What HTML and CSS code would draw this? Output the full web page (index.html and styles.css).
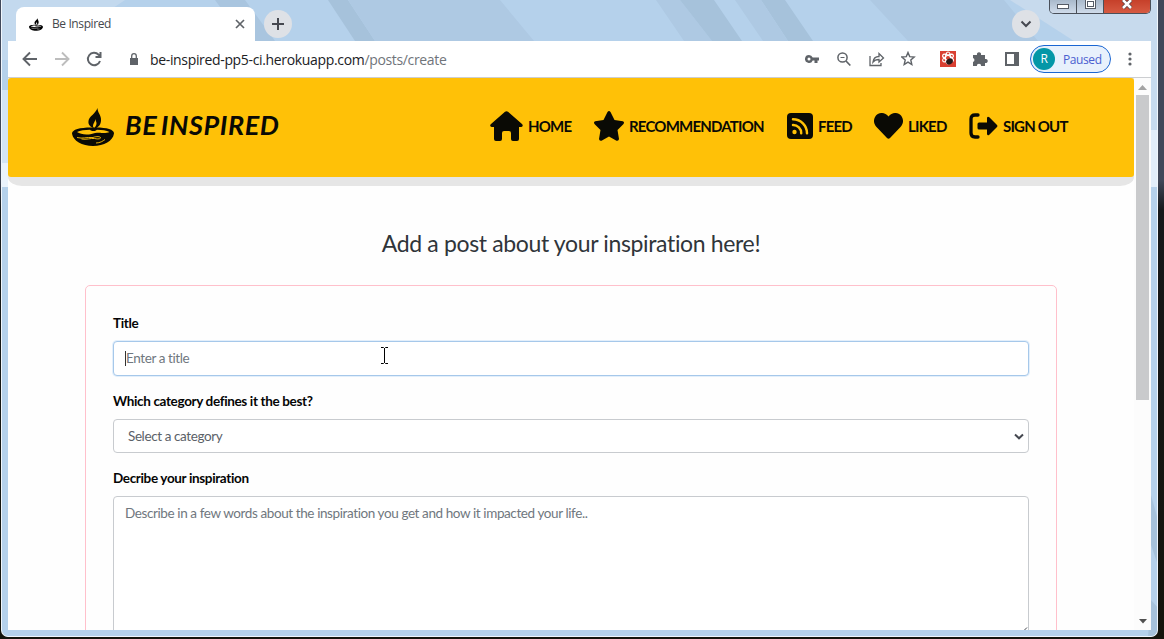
FILE: index.html
```html
<!DOCTYPE html>
<html lang="en">
<head>
<meta charset="utf-8">
<title>Be Inspired</title>
<link rel="stylesheet" href="styles.css">
</head>
<body>
<svg width="0" height="0" class="defs">
  <symbol id="lamp" viewBox="0 0 42 38">
    <path fill-rule="evenodd" d="M25.500 0c0 5 4 7 3.500 12.500-.3 4-2 6.500-6 8C18 19 16 16.500 16.500 13 17 8 23.500 6 25.500 0zM23.500 11c-.5 3-2.500 4.500-2.500 7 0 1 .6 2 1.500 2.700.3-2 2-3 2-5.200 0-1.700-1-2.800-1-4.500z"/>
    <path d="M0 25.500C0 21.500 8 19.500 19 19.500h5c11 0 18 2 18 6C41 33 32 38 21 38S1 33 0 25.500z"/>
    <path class="gold" d="M5 24c3-1.500 8-2.300 13-2.300 1 1 2 1.300 3.500 1.300s2.500-.4 3.500-1.300c5 0 9.500.8 12.500 2.300-2 .8-5 1.200-8 .9-4-.4-7 .2-10 1-5 1-11 .6-14.500-1.900z"/>
    <path class="wave" d="M5 29.500c6 1.500 9-.5 16 0 4-1.500 8-1 7.500.6-1 1.300-4 .8-6 .4-4-.5-8 1.500-13 .5M24 35c4 0 7-2 9-3.500"/>
  </symbol>
</svg>
<div class="window">
  <svg class="glass" width="1157" height="637" viewBox="1 0 1157 637">
    <path fill="#c3d9ee" d="M1 0h124l-90 60H1z"/>
    <path fill="#d3e4f5" d="M1 90h8v75H1z"/>
    <path fill="#eaf3fc" d="M1 163h8v24H1z"/>
    <path fill="#a9c5df" d="M215 0h30l30 41h-30z"/>
    <path fill="#a6c2db" d="M328 0h20l27 41h-20z"/>
    <path fill="#aec9e3" d="M348 0h152l34 41H375zM656 0h24l32 41h-28z"/>
    <path fill="#a6c2db" d="M680 0h34l28 41h-30zM761 0h24l28 41h-25z"/>
    <path fill="#aec9e3" d="M735 0h26l27 41h-25zM870 0h134l34 41H908z"/>
    <path fill="#c7daed" d="M1010 0h142v41h-78z"/>
    <path fill="#c7dbef" d="M1151 0h8v130h-8z"/>
    <path fill="#e2eefa" d="M1151 130h8v57h-8z"/>
    <path fill="#a6c2db" d="M1151 495l7 25v45l-7-20zM1151 600l7 8v29h-10z"/>
  </svg>
  <div class="tabstrip">
    <div class="tab">
      <svg class="favicon" width="14" height="13"><use href="#lamp"/></svg>
      <span class="tab-title">Be Inspired</span>
      <svg width="10" height="10" viewBox="0 0 10 10"><path class="line" stroke-width="1.700" d="M1 1l8 8M9 1L1 9"/></svg>
    </div>
    <div class="round">
      <svg width="14" height="14" viewBox="0 0 14 14"><path class="line dark" stroke-width="2" d="M7 1v12M1 7h12"/></svg>
    </div>
    <div class="round search">
      <svg width="12" height="8" viewBox="0 0 12 8"><path class="line dark" stroke-width="2" d="M1.500 1.500L6 6l4.500-4.500"/></svg>
    </div>
    <div class="controls">
      <span class="ctl min"><i></i></span><span class="ctl max"><i></i></span>
      <span class="ctl close"><svg width="12" height="10" viewBox="0 0 12 10"><path d="M2 0l8 8M10 0L2 8" fill="none" stroke="#5a4040" stroke-width="4"/><path d="M2 0l8 8M10 0L2 8" fill="none" stroke="#fff" stroke-width="2.500"/></svg></span>
    </div>
  </div>
  <div class="toolbar">
    <svg width="32" height="16" viewBox="0 0 32 16"><path class="line" stroke-width="1.900" d="M15 8H2M8 1.500L1.500 8 8 14.500"/></svg>
    <svg width="32" height="16" viewBox="0 0 32 16"><path class="line pale" stroke-width="1.900" d="M1 8h13M8 1.500L14.500 8 8 14.500"/></svg>
    <svg width="43" height="16" viewBox="0 0 43 16"><path class="line" stroke-width="2" d="M14 10a6.200 6.200 0 1 1-1.400-6.300L14.500 6M9.500 6h5V1"/></svg>
    <svg width="21" height="13" viewBox="0 0 21 13"><path fill="#5f6368" d="M1 5h8v7H1z"/><path class="line" stroke-width="1.300" d="M2.700 5V3a2.300 2.300 0 0 1 4.600 0v2"/></svg>
    <div class="url">be-inspired-pp5-ci.herokuapp.com<span>/posts/create</span></div>
    <div class="tools">
      <svg width="32" height="16" viewBox="0 0 32 16"><path fill="#5f6368" fill-rule="evenodd" d="M4 4a4 4 0 0 1 3.700 2.500H14v3h-1.500V12h-3V9.500H7.700A4 4 0 1 1 4 4zm0 2.500a1.500 1.500 0 1 0 0 3 1.500 1.500 0 0 0 0-3z"/></svg>
      <svg width="32" height="16" viewBox="0 0 32 16"><circle class="line" stroke-width="1.500" cx="5.500" cy="6.500" r="4.600"/><path class="line" stroke-width="1.700" d="M9 10l4.300 4.500"/><path class="line" d="M3.500 6.500h4"/></svg>
      <svg width="32" height="16" viewBox="0 0 32 16"><path class="line" stroke-width="1.300" d="M1 5v9.500h11V12M4 11c.5-4 2.500-5.500 6-5.500V2.500L14.500 7 10 11V8.500C7 8.500 5.500 9 4 11z"/></svg>
      <svg width="39" height="16" viewBox="0 0 39 16"><path class="line" stroke-width="1.400" d="M7 1.500l1.700 4.100 4.500.4-3.400 3 1 4.500L7 11.100l-3.800 2.400 1-4.500-3.400-3 4.500-.4z"/></svg>
      <svg width="33" height="16" viewBox="0 0 33 16"><path fill="#d94032" d="M0 0h16v16H0z"/><g fill="none" stroke="#fff" stroke-width="1.200"><ellipse cx="8" cy="7" rx="2.500" ry="6"/><ellipse cx="8" cy="7" rx="2.500" ry="6" transform="rotate(60 8 7)"/><ellipse cx="8" cy="7" rx="2.500" ry="6" transform="rotate(-60 8 7)"/></g><ellipse cx="9.500" cy="10.500" rx="3.500" ry="2.800" fill="#251a1a" transform="rotate(-30 9.500 10.500)"/></svg>
      <svg width="32" height="16" viewBox="0 0 32 16"><path fill="#5f6368" d="M0 4h4a2.100 2.100 0 1 1 4 0h4v4a2.100 2.100 0 1 1 0 4v3H8.200a2.200 2.200 0 0 0-4.400 0H0v-4a2.100 2.100 0 0 0 0-4z"/></svg>
      <svg width="25" height="16" viewBox="0 0 25 16"><path fill="#5f6368" fill-rule="evenodd" d="M0 1h14v14H0zm2 2v10h7V3z"/></svg>
      <div class="profile"><b>R</b><span>Paused</span></div>
      <svg width="6" height="16" viewBox="0 0 6 16"><g fill="#5f6368"><circle cx="3" cy="3" r="1.600"/><circle cx="3" cy="8" r="1.600"/><circle cx="3" cy="13" r="1.600"/></g></svg>
    </div>
  </div>
  <div class="viewport">
    <div class="page">
      <div class="header-shadow">
        <header>
          <svg class="logo" width="42" height="38"><use href="#lamp"/></svg>
          <div class="brand">BE INSPIRED</div>
          <nav>
            <a class="home"><svg width="33" height="30" viewBox="0 0 33 30"><path d="M15 .8q1.500-1.300 3 0L32 13q1 1 .6 2-.3 1-1.600 1h-2v12q0 2-2 2h-4q-2 0-2-2v-6q0-2-2-2h-5q-2 0-2 2v6q0 2-2 2H6q-2 0-2-2V16H2q-1.300 0-1.700-1-.4-1 .7-2z"/></svg><span>HOME</span></a>
            <a class="rec"><svg width="30" height="30" viewBox="0 0 30 30"><path d="M13.500 1q1.500-2 3 0l4 8 8.300 1.200q2 .8.700 2.800l-6 6 1.500 9q-.3 2.300-2.500 1.700L15 25.500l-7.500 4.200Q5.300 30.300 5 28l1.500-9-6-6q-1.300-2 .7-2.800L9.500 9z"/></svg><span>RECOMMENDATION</span></a>
            <a class="feed"><svg width="26" height="26" viewBox="0 0 26 26"><rect width="26" height="26" rx="4"/><g fill="none" stroke="#ffc107" stroke-width="2.500" stroke-linecap="round"><path d="M6 6.200a14 14 0 0 1 14 14M6 12a8 8 0 0 1 8.200 8.200"/></g><circle cx="7.500" cy="19" r="2.200" fill="#ffc107"/></svg><span>FEED</span></a>
            <a class="liked"><svg width="29" height="26" viewBox="0 0 29 26"><path d="M14.500 3.500C18-1 24-1 27 2.500c3 4 2.500 8-.5 11.500L16 25q-1.500 1.500-3 0L2.500 14C-.5 10.500-1 6.500 2 2.500 5-1 11-1 14.500 3.500z"/></svg><span>LIKED</span></a>
            <a class="out"><svg width="29" height="26" viewBox="0 0 29 26"><path fill="none" stroke="#0a0a05" stroke-width="3.300" stroke-linecap="round" d="M9 2H6Q2 2 2 6v14q0 4 4 4h3"/><path d="M10 9.500h8V5q.5-2 2.300-.7L28 12q1 1 0 2l-7.700 7.700Q18.500 23 18 21v-4.500h-8q-1.500 0-1.500-1.500v-4q0-1.500 1.500-1.500z"/></svg><span>SIGN OUT</span></a>
          </nav>
        </header>
      </div>
      <h1>Add a post about your inspiration here!</h1>
      <form>
        <label>Title</label>
        <div class="field focus"><span>Enter a title</span></div>
        <label>Which category defines it the best?</label>
        <div class="field select"><span>Select a category</span><svg width="10" height="7" viewBox="0 0 10 7"><path class="line dark" stroke-width="2" d="M1 1.500l4 3.800 4-3.800"/></svg></div>
        <label>Decribe your inspiration</label>
        <div class="field area"><span>Describe in a few words about the inspiration you get and how it impacted your life..</span></div>
        <svg class="grip" width="5" height="4" viewBox="0 0 5 4"><path class="line dark" d="M1 3.500l3-3"/></svg>
      </form>
    </div>
    <div class="scrollbar">
      <svg width="9" height="5" viewBox="0 0 9 5"><path fill="#a3a3a3" d="M4.500 0L9 5H0z"/></svg>
      <div class="thumb"></div>
      <svg class="down" width="8" height="5" viewBox="0 0 8 5"><path fill="#505050" d="M0 0h8L4 4.500z"/></svg>
    </div>
  </div>
  <svg class="cursor" width="9" height="17" viewBox="0 0 9 17"><path fill="none" stroke="#000" d="M1 .5h2.500l1 1 1-1H8M4.500 1v15M1 16.500h2.500l1-1 1 1H8"/></svg>
</div>
</body>
</html>
```

FILE: styles.css
```css
* { box-sizing: border-box; }
body { margin: 0; height: 639px; overflow: hidden; background: linear-gradient(#40485a 0, #40485a 180px, #15181a 210px, #14140c 639px); font-family: Lato, sans-serif; }
svg { display: block; flex: none; }
.defs { position: absolute; }
.wave { fill: none; stroke: var(--back); stroke-width: .9; }
.gold { fill: var(--back); }
.logo { --back: #ffc107; margin-top: 30px; }
.favicon { --back: #fff; }
.line { fill: none; stroke: #5f6368; }
.pale { stroke: #bdbdbd; }
.dark { stroke: #454850; }
.window { position: relative; margin-left: 1px; width: 1157px; height: 637px; padding: 0 6px 6px; border: 1px solid #f0f6fc; border-top: 0; border-radius: 0 0 7px 7px; background: #b5d1eb; overflow: hidden; }
.glass { position: absolute; left: -1px; top: 0; }
.tabstrip { position: relative; display: flex; height: 41px; font-family: "Open Sans", sans-serif; }
.tab { display: flex; align-items: center; width: 240px; height: 34px; margin: 7px 0 0 8px; padding: 0 10px 0 13px; background: #fff; border-radius: 8px 8px 0 0; }
.tab-title { flex: 1; margin: -1px 0 0 9px; font-size: 12px; letter-spacing: -.4px; color: #45484d; }
.round { display: grid; place-items: center; width: 28px; height: 28px; margin: 10px 0 0 9px; border-radius: 50%; background: #dee1e6; }
.search { margin-left: 720px; }
.controls { display: flex; width: 103px; height: 14px; margin-left: 9px; border: 1px solid #4a505a; border-top: 0; border-radius: 0 0 5px 5px; overflow: hidden; }
.ctl { display: flex; justify-content: center; width: 28px; border-right: 1px solid #4a505a; background: linear-gradient(#a9b9cb, #cfdbea); }
.ctl i { width: 12px; height: 5px; margin-top: 4px; border: 1px solid #555b66; background: #fff; }
.ctl.max i { width: 11px; height: 10px; margin-top: -1px; border: 3px double #555b66; }
.ctl.close { width: 47px; border: 0; background: linear-gradient(#c6402a, #d65a42); }
.toolbar { position: relative; display: flex; align-items: center; height: 37px; padding-left: 14px; background: #fff; border-bottom: 1px solid #ccced1; font-family: "Open Sans", sans-serif; }
.url { flex: 1; font-size: 14px; letter-spacing: -.34px; color: #202124; white-space: nowrap; }
.url span { color: #70747a; }
.tools { display: flex; align-items: center; width: 346px; }
.profile { display: flex; align-items: center; width: 81px; height: 28px; margin-right: 16px; padding-left: 2px; border: 1px solid #1a66d2; border-radius: 14px; background: #e8f1fc; color: #4a60d0; font-size: 12px; letter-spacing: -.4px; }
.profile b { width: 22px; height: 22px; margin-right: 8px; border-radius: 50%; background: #0497a7; color: #fff; font-weight: 400; line-height: 22px; text-align: center; }
.viewport { position: relative; display: flex; height: 552px; background: #fff; }
.page { width: 1126px; height: 552px; overflow: hidden; background: #fefefe; }
.header-shadow { height: 108px; background: #e6e6e6; border-radius: 0 0 14px 14px / 0 0 9px 9px; }
header { display: flex; height: 99px; padding-left: 64px; border-radius: 3px; background: #ffc107; color: #0a0a05; fill: #0a0a05; }
.brand { width: 376px; padding: 0 0 0 11px; line-height: 94px; font-size: 27px; font-style: italic; font-weight: 700; letter-spacing: .6px; word-spacing: -3px; white-space: nowrap; }
nav { display: flex; align-items: center; height: 95px; font-size: 15px; font-weight: 700; letter-spacing: -.8px; white-space: nowrap; }
nav a { display: flex; align-items: center; }
nav a span { margin-left: 5px; }
.home { width: 104px; }
.rec { width: 193px; }
.feed { width: 87px; }
.liked { width: 95px; }
h1 { margin: 40px 0 0; line-height: 34px; font-size: 23px; font-weight: 400; letter-spacing: -.35px; text-align: center; color: #30353a; }
form { position: relative; display: flex; flex-direction: column; width: 972px; height: 500px; margin: 25px 0 0 77px; padding: 27px; border: 1px solid pink; border-radius: 5px; }
label { flex: none; height: 28px; line-height: 20px; font-size: 13.5px; font-weight: 700; letter-spacing: -.35px; color: #050505; }
.field { flex: none; display: flex; align-items: center; width: 916px; height: 35px; margin-bottom: 15px; padding-left: 11px; border: 1px solid #c8cbcf; border-radius: 4px; background: #fff; color: #70777e; font-size: 13.5px; letter-spacing: -.4px; }
.focus { border-color: #a6c8ea; box-shadow: 0 0 0 1px #e3effb; }
.focus span { border-left: 1px solid #333; line-height: 15px; }
.select { height: 34px; padding: 0 4px 0 14px; justify-content: space-between; color: #5b6168; }
.area { height: 300px; align-items: flex-start; padding-top: 8px; }
.grip { position: absolute; right: 28px; top: 341px; }
.scrollbar { display: flex; flex-direction: column; align-items: center; width: 17px; padding: 7px 0 6px; background: #fcfcfc; }
.thumb { width: 13px; height: 305px; margin-top: 5px; background: #c9cacc; }
.down { margin-top: auto; }
.cursor { position: absolute; left: 378px; top: 347px; }
```
